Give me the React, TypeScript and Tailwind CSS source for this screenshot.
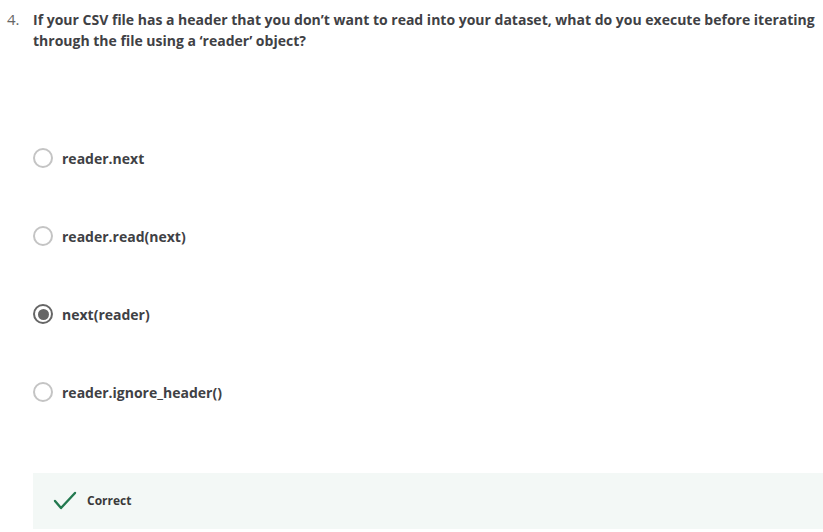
import React from "react";

const options = [
  { label: "reader.next", selected: false },
  { label: "reader.read(next)", selected: false },
  { label: "next(reader)", selected: true },
  { label: "reader.ignore_header()", selected: false },
];

function Radio({ selected }: { selected: boolean }) {
  if (selected) {
    return (
      <span className="flex h-[20px] w-[20px] shrink-0 items-center justify-center rounded-full border-2 border-[#666666]">
        <span className="h-[11px] w-[11px] rounded-full bg-[#666666]" />
      </span>
    );
  }
  return <span className="h-[20px] w-[20px] shrink-0 rounded-full border-2 border-[#c4c4c4]" />;
}

export default function App() {
  return (
    <div
      className="h-[532px] w-[823px] overflow-hidden bg-white text-[#3d3d3d]"
      style={{ fontFamily: '"Open Sans", "Liberation Sans", sans-serif' }}
    >
      <div className="flex pt-[9px]">
        <span className="w-[33px] shrink-0 pl-[7px] text-[15px] leading-[21px] text-[#666]">4.</span>
        <p className="pr-[4px] text-[14px] font-bold leading-[21px] text-[#3f4145]">
          If your CSV file has a header that you don’t want to read into your dataset, what do you execute before iterating through the file using a ‘reader’ object?
        </p>
      </div>
      <div className="mt-[68px] flex flex-col pl-[33px]">
        {options.map((o) => (
          <div key={o.label} className="flex h-[78px] items-center gap-[9px]">
            <Radio selected={o.selected} />
            <span className="text-[14px] font-bold text-[#3f4145]">{o.label}</span>
          </div>
        ))}
      </div>
      <div className="ml-[33px] mt-[42px] flex h-[56px] items-center bg-[#f3f8f6] pl-[20px]">
        <svg width="24" height="20" viewBox="0 0 24 20" className="shrink-0">
          <polyline points="2,10 8,17 22,2" fill="none" stroke="#22794f" strokeWidth="2.4" strokeLinecap="round" strokeLinejoin="round" />
        </svg>
        <span className="ml-[10px] text-[12px] font-bold text-[#3a3a3a]">Correct</span>
      </div>
    </div>
  );
}
